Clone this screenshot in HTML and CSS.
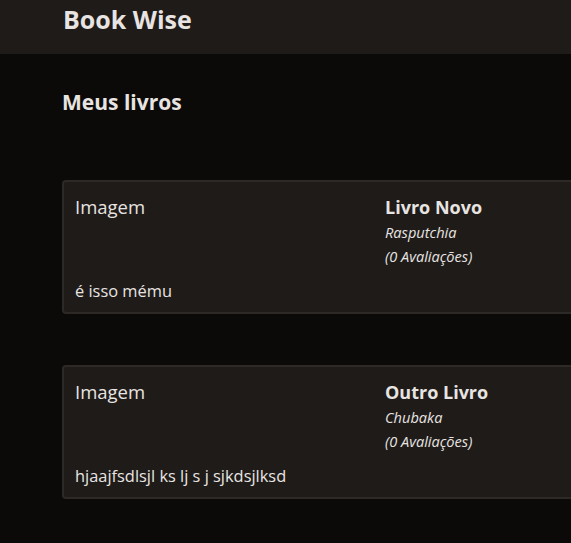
FILE: index.html
```html
<!DOCTYPE html>
<html lang="pt-BR">
<head>
<meta charset="utf-8">
<title>Book Wise</title>
<link rel="stylesheet" href="styles.css">
</head>
<body>
<header class="topbar">
  <h1 class="brand">Book Wise</h1>
</header>
<main class="content">
  <h2 class="page-title">Meus livros</h2>
  <section class="book-list">
    <article class="book-card">
      <div class="book-image">Imagem</div>
      <div class="book-info">
        <h3 class="book-title">Livro Novo</h3>
        <p class="book-author">Rasputchia</p>
        <p class="book-reviews">(0 Avaliações)</p>
      </div>
      <p class="book-desc">é isso mému</p>
    </article>
    <article class="book-card">
      <div class="book-image">Imagem</div>
      <div class="book-info">
        <h3 class="book-title">Outro Livro</h3>
        <p class="book-author">Chubaka</p>
        <p class="book-reviews">(0 Avaliações)</p>
      </div>
      <p class="book-desc">hjaajfsdlsjl ks lj s j sjkdsjlksd</p>
    </article>
  </section>
</main>
</body>
</html>
```
FILE: styles.css
```css
html, body {
  margin: 0;
  padding: 0;
  overflow: hidden;
}
body {
  background: #0b0a09;
  color: #e8e4e1;
  font-family: "Open Sans", "Noto Sans", sans-serif;
  min-height: 543px;
}
.topbar {
  background: #1e1b19;
  height: 54px;
  padding: 0 63px;
  box-sizing: border-box;
}
.brand {
  margin: 0;
  font-size: 25px;
  font-weight: 700;
  line-height: 38px;
}
.content {
  padding: 33px 62px 0;
}
.page-title {
  margin: 0 0 63px;
  font-size: 21px;
  font-weight: 700;
  line-height: 30px;
}
.book-list {
  display: flex;
  flex-direction: column;
  gap: 51px;
}
.book-card {
  width: 640px;
  background: #1e1b19;
  border: 2px solid #2c2927;
  border-radius: 4px;
  display: grid;
  grid-template-columns: 310px 1fr;
  padding: 12px 11px 9px;
}
.book-image {
  font-size: 18.5px;
  line-height: 26px;
}
.book-info {
  display: flex;
  flex-direction: column;
}
.book-title {
  margin: 0;
  font-size: 18px;
  font-weight: 700;
  line-height: 26px;
}
.book-author,
.book-reviews {
  margin: 0;
  font-size: 14.6px;
  font-style: italic;
  line-height: 24px;
}
.book-desc {
  grid-column: 1 / -1;
  margin: 0;
  padding-top: 11px;
  font-size: 16.4px;
  line-height: 24px;
}
```
